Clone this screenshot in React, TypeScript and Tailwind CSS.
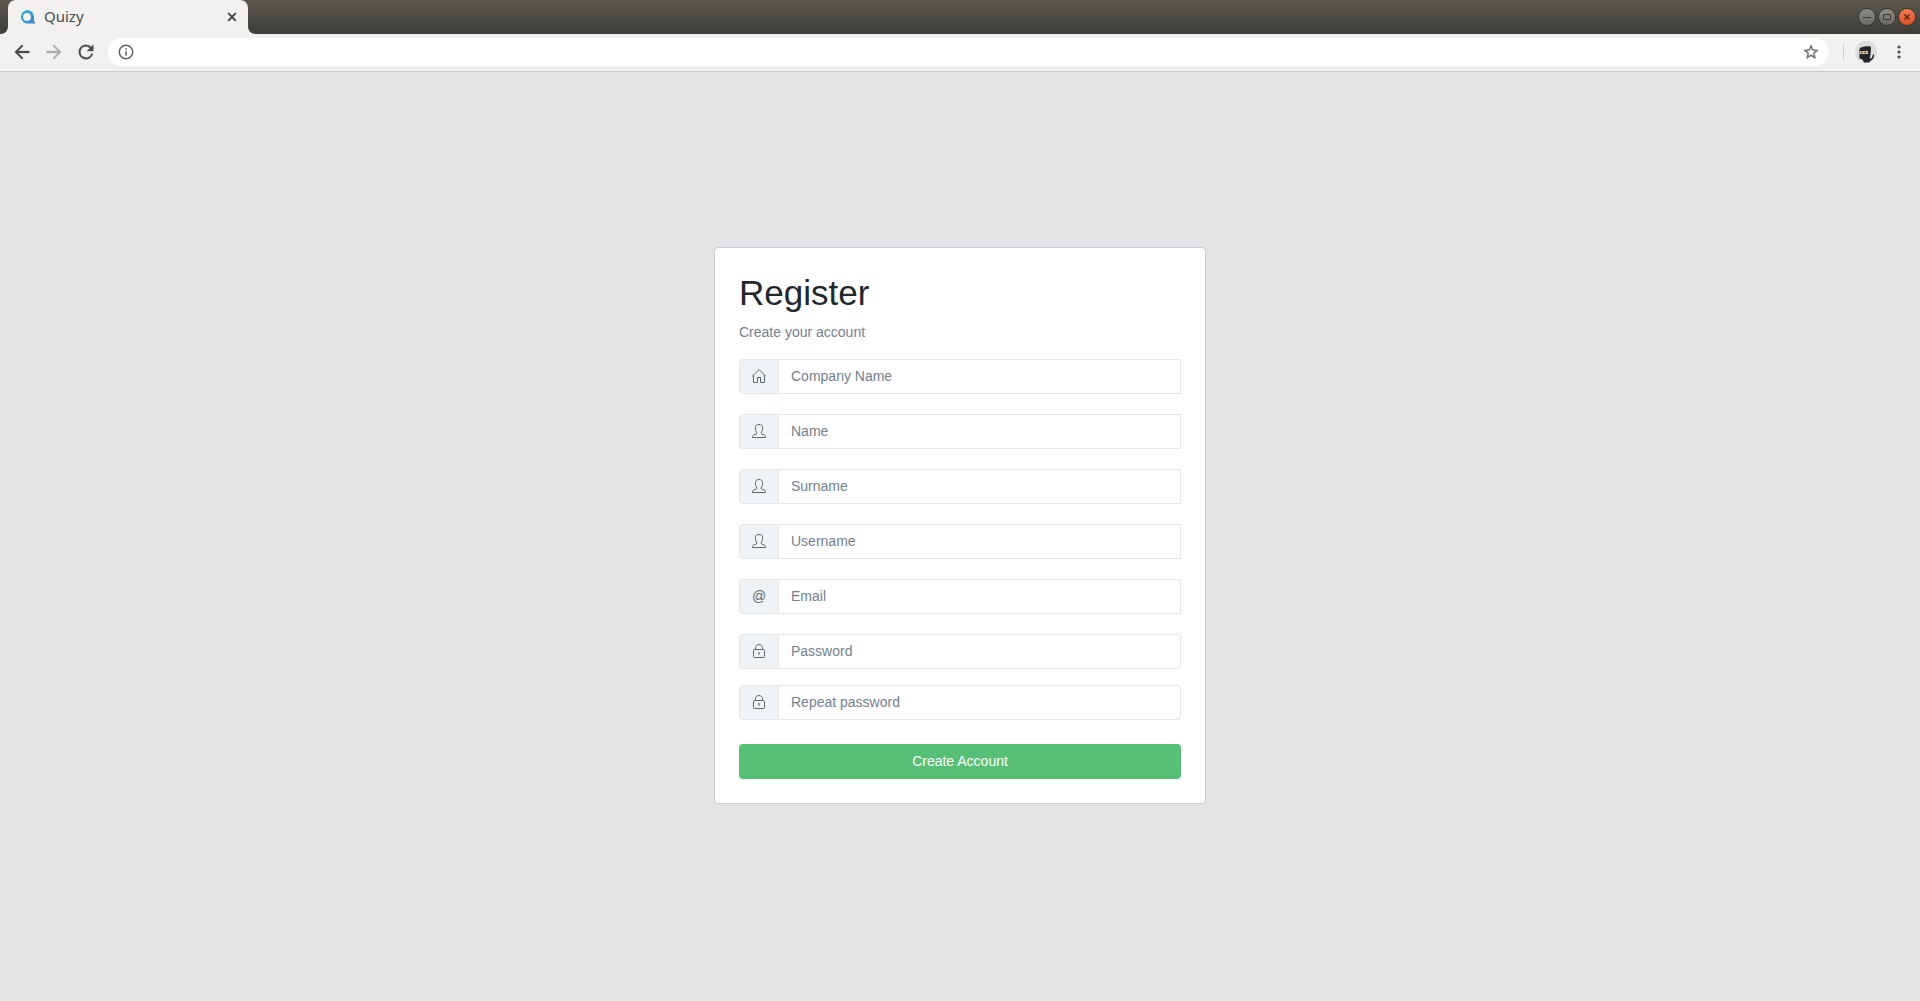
import { useState } from "react";

type Field = {
  id: string;
  label: string;
  type: string;
  icon: "home" | "user" | "at" | "lock";
  inputClass: string;
  rowClass: string;
};

const fields: Field[] = [
  { id: "company", label: "Company Name", type: "text", icon: "home", inputClass: "", rowClass: "mb-5" },
  { id: "name", label: "Name", type: "text", icon: "user", inputClass: "", rowClass: "mb-5" },
  { id: "surname", label: "Surname", type: "text", icon: "user", inputClass: "", rowClass: "mb-5" },
  { id: "username", label: "Username", type: "text", icon: "user", inputClass: "", rowClass: "mb-5" },
  { id: "email", label: "Email", type: "email", icon: "at", inputClass: "", rowClass: "mb-5" },
  { id: "password", label: "Password", type: "password", icon: "lock", inputClass: "rounded-r", rowClass: "mb-4" },
  { id: "repeat", label: "Repeat password", type: "password", icon: "lock", inputClass: "rounded-r", rowClass: "mb-6" },
];

function FieldIcon({ name }: { name: Field["icon"] }) {
  if (name === "at") {
    return <span>@</span>;
  }
  return (
    <svg width="14" height="14" viewBox="0 0 14 14" fill="none" stroke="currentColor" strokeWidth="1" strokeLinejoin="round" strokeLinecap="round">
      {name === "home" && (
        <path d="M.5 7 7 .5 13.5 7M1.500 6.500v7h4v-5h3v5h4v-7" />
      )}
      {name === "user" && (
        <path d="M.5 13.500h13v-1c0-.8-.5-1.300-1.500-1.600l-2-.7c-.6-.2-.8-.6-.8-1.200 0-.7.8-1.300 1.100-2.600.2-.8.400-1.700.4-2.600C10.700 1.700 9.400.5 7 .5S3.300 1.700 3.300 3.800c0 .9.2 1.800.4 2.600C4 7.700 4.800 8.300 4.800 9c0 .6-.2 1-.8 1.200l-2 .7c-1 .3-1.500.8-1.500 1.600Z" />
      )}
      {name === "lock" && (
        <>
          <rect x="1.500" y="5.500" width="11" height="8" rx="1" />
          <path d="M3.500 5.500V3.800C3.500 1.800 5 .5 7 .5s3.500 1.300 3.500 3.300v1.700M7 8.800v1.700" />
          <path d="M6.700 8.800h.6" />
        </>
      )}
    </svg>
  );
}

function TabStrip() {
  return (
    <div className="flex h-[34px] items-stretch justify-between bg-linear-to-b from-[#5b594f] to-[#3e3d38]">
      <div className="flex">
        <svg width="8" height="34" viewBox="0 0 8 34" fill="#f2f1f0">
          <path d="M8 26v8H0c5 0 8-3 8-8Z" />
        </svg>
        <div className="flex w-60 items-center rounded-t-lg bg-[#f2f1f0] pr-2 pl-[11px]">
          <svg width="17" height="16" viewBox="0 0 17 16" fill="none">
            <defs>
              <linearGradient id="logo" x1="0" y1="0" x2="1" y2="1">
                <stop offset="0" stopColor="#2fb8e0" />
                <stop offset="1" stopColor="#3b7fc0" />
              </linearGradient>
            </defs>
            <path
              fill="url(#logo)"
              fillRule="evenodd"
              d="M8 1a7 6.800 0 0 1 7 6.800v3c0 1.500.5 2.600 1.500 3.700H8A7 6.800 0 0 1 8 1Zm0 3a3.900 3.900 0 1 0 0 7.800A3.900 3.900 0 0 0 8 4Z"
            />
          </svg>
          <span className="ml-2 flex-1 pb-0.5 font-['Noto_Sans',sans-serif] text-[15px] leading-5 text-[#4c4c4c]">Quizy</span>
          <button type="button" aria-label="Close tab" className="flex size-4 items-center justify-center">
            <svg width="10" height="10" viewBox="0 0 10 10" stroke="#3c3c3c" strokeWidth="1.700">
              <path d="m1.200 1.200 7.600 7.600M8.800 1.200 1.200 8.800" />
            </svg>
          </button>
        </div>
        <svg width="8" height="34" viewBox="0 0 8 34" fill="#f2f1f0">
          <path d="M0 26v8h8c-5 0-8-3-8-8Z" />
        </svg>
      </div>
      <div className="flex items-center gap-1 pr-[5px]">
        <button type="button" aria-label="Minimize" className="flex size-4 items-center justify-center rounded-full bg-linear-to-b from-[#8c8b84] to-[#6b6a64] ring-1 ring-[#35342f]">
          <svg width="16" height="16" viewBox="0 0 16 16" stroke="#3b3a36">
            <path d="M4 8.500h8" />
          </svg>
        </button>
        <button type="button" aria-label="Maximize" className="flex size-4 items-center justify-center rounded-full bg-linear-to-b from-[#8c8b84] to-[#6b6a64] ring-1 ring-[#35342f]">
          <svg width="16" height="16" viewBox="0 0 16 16" fill="none" stroke="#3b3a36">
            <path d="M4.500 5.500h7v5h-7z" />
          </svg>
        </button>
        <button type="button" aria-label="Close window" className="flex size-4 items-center justify-center rounded-full bg-linear-to-b from-[#f37a50] to-[#dd4f22] ring-1 ring-[#35342f]">
          <svg width="16" height="16" viewBox="0 0 16 16" stroke="#4a2415" strokeWidth="1.200">
            <path d="m5.500 5.500 5 5M10.500 5.500l-5 5" />
          </svg>
        </button>
      </div>
    </div>
  );
}

function Toolbar() {
  const [url, setUrl] = useState("");

  return (
    <div className="flex h-[38px] items-center border-b border-[#d0cfcb] bg-[#f2f1f0] pr-[11px] pb-px pl-[11px]">
      <div className="mr-[11px] flex gap-2.5">
        <button type="button" aria-label="Back" className="text-[#4a4a4a]">
          <svg width="22" height="22" viewBox="0 0 24 24" fill="currentColor" stroke="currentColor" strokeWidth=".3">
            <path d="M20 11H7.830l5.590-5.590L12 4l-8 8 8 8 1.410-1.410L7.830 13H20v-2z" />
          </svg>
        </button>
        <button type="button" aria-label="Forward" className="text-[#adacab]">
          <svg width="22" height="22" viewBox="0 0 24 24" fill="currentColor" stroke="currentColor" strokeWidth=".3">
            <path d="m12 4-1.410 1.410L16.170 11H4v2h12.170l-5.580 5.590L12 20l8-8z" />
          </svg>
        </button>
        <button type="button" aria-label="Reload" className="text-[#4a4a4a]">
          <svg width="22" height="22" viewBox="0 0 24 24" fill="currentColor" stroke="currentColor" strokeWidth=".3">
            <path d="M17.650 6.350A7.960 7.960 0 0 0 12 4a8 8 0 1 0 7.730 10h-2.080A6 6 0 1 1 12 6c1.660 0 3.140.690 4.220 1.780L13 11h7V4l-2.350 2.350z" />
          </svg>
        </button>
      </div>
      <div className="flex h-7 flex-1 items-center rounded-full bg-white pr-[9px] pl-[9px]">
        <svg width="18" height="18" viewBox="0 0 24 24" fill="#5f6368">
          <path d="M11 17h2v-6h-2v6zm1-15a10 10 0 1 0 0 20 10 10 0 0 0 0-20zm0 18a8 8 0 1 1 0-16 8 8 0 0 1 0 16zM11 9h2V7h-2v2z" />
        </svg>
        <input
          type="text"
          aria-label="Address"
          value={url}
          onChange={(e) => setUrl(e.target.value)}
          className="mx-2 min-w-0 flex-1 bg-transparent text-sm outline-none"
        />
        <button type="button" aria-label="Bookmark this page">
          <svg width="18" height="18" viewBox="0 0 24 24" fill="#6a6a6a" stroke="#6a6a6a" strokeWidth=".4">
            <path d="m22 9.240-7.190-.62L12 2 9.190 8.630 2 9.240l5.460 4.730L5.820 21 12 17.270 18.180 21l-1.630-7.030L22 9.240zM12 15.400l-3.760 2.270 1-4.280-3.320-2.880 4.380-.38L12 6.100l1.710 4.040 4.380.38-3.320 2.880 1 4.280L12 15.400z" />
          </svg>
        </button>
      </div>
      <div className="mr-[11px] ml-3.5 h-4 w-px bg-[#cfcecd]" />
      <button type="button" aria-label="Profile" className="mr-3">
        <svg width="22" height="22" viewBox="0 0 22 22">
          <circle cx="11" cy="11" r="11" fill="#dcdddf" />
          <path fill="#232427" d="M5 7c3-1.800 7-2.200 10.500-1.600.5.5.6 1.200.5 2L15.200 16l-.8 1.500c1.600.3 2.800-.5 3-2.200l.6-1.800 1.200.2c0 2.500-1.200 4.700-3.200 5.800L14 21.500H9L7.500 18.500l-3-1-.3-8z" />
          <path fill="#e0b48c" d="M4.500 10h8.500v3H4.500z" />
          <path fill="#2a2118" d="M6 11h1.500v1H6zm3.500 0H11v1H9.500z" />
        </svg>
      </button>
      <button type="button" aria-label="Menu">
        <svg width="20" height="20" viewBox="0 0 20 20" fill="#4a4a4a">
          <circle cx="10" cy="5" r="1.600" />
          <circle cx="10" cy="10" r="1.600" />
          <circle cx="10" cy="15" r="1.600" />
        </svg>
      </button>
    </div>
  );
}

function RegisterForm() {
  const [values, setValues] = useState<Record<string, string>>({});

  return (
    <form
      onSubmit={(e) => e.preventDefault()}
      className="w-full max-w-[492px] rounded border border-[#c8ced3] bg-white p-6"
    >
      <h1 className="mb-2 text-[35px] leading-[42px] font-medium text-[#23282c]">Register</h1>
      <p className="mb-4 text-sm leading-[21px] text-[#73818f]">Create your account</p>

      {fields.map((field) => (
        <div key={field.id} className={`flex h-[35px] text-sm ${field.rowClass}`}>
          <label
            htmlFor={field.id}
            aria-label={field.label}
            className="flex w-10 items-center justify-center rounded-l border border-[#e4e7ea] bg-[#f0f3f5] pb-px text-[#5c6873]"
          >
            <FieldIcon name={field.icon} />
          </label>
          <input
            id={field.id}
            type={field.type}
            placeholder={field.label}
            value={values[field.id] || ""}
            onChange={(e) => setValues({ ...values, [field.id]: e.target.value })}
            className={`min-w-0 flex-1 border border-l-0 border-[#e4e7ea] bg-white px-3 pb-0.5 text-[#5c6873] placeholder:text-[#73818f] ${field.inputClass}`}
          />
        </div>
      ))}

      <button type="submit" className="h-[35px] w-full rounded bg-[#56bf75] pb-0.5 text-sm text-white">
        Create Account
      </button>
    </form>
  );
}

export default function App() {
  return (
    <div className="flex min-h-screen flex-col font-['Liberation_Sans',Arial,sans-serif]">
      <TabStrip />
      <Toolbar />
      <main className="flex flex-1 items-center justify-center bg-[#e4e5e6] pb-[22px]">
        <RegisterForm />
      </main>
    </div>
  );
}
